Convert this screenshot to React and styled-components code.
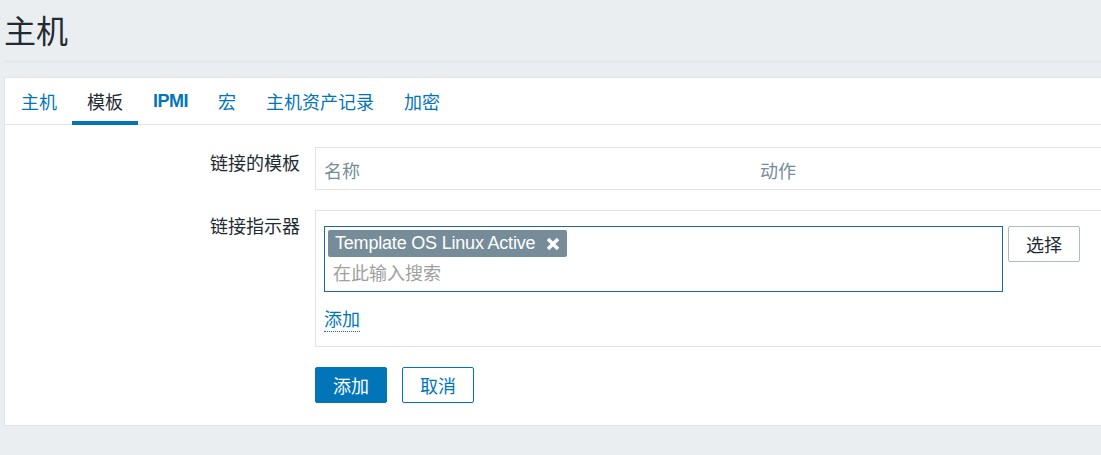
import React from "react";
import styled, { createGlobalStyle } from "styled-components";

const GlobalStyle = createGlobalStyle`
  html, body {
    margin: 0;
    padding: 0;
    background: #ebeef0;
    overflow: hidden;
  }
  body {
    font-family: "Liberation Sans", Arial, "Noto Sans CJK SC", sans-serif;
    font-size: 18px;
    color: #1f2c33;
  }
  * { box-sizing: border-box; }
`;

const Page = styled.div`
  width: 1400px;
  padding-left: 4px;
`;

const Header = styled.header`
  height: 62px;
  display: flex;
  align-items: center;
  border-bottom: 1px solid #dfe4e7;
`;

const Title = styled.h1`
  margin: 0;
  padding-top: 3px;
  font-size: 32px;
  font-weight: normal;
  line-height: 40px;
  color: #1f2c33;
`;

const Panel = styled.section`
  margin-top: 15px;
  background: #ffffff;
  border: 1px solid #dfe4e7;
  padding-bottom: 22px;
`;

const TabList = styled.nav`
  display: flex;
  height: 47px;
  padding-left: 1px;
  border-bottom: 1px solid #dfe4e7;
`;

const Tab = styled.a`
  position: relative;
  display: flex;
  align-items: center;
  padding: 0 15px;
  color: ${(p) => (p.$active ? "#1f2c33" : "#0275b8")};
  font-weight: ${(p) => (p.$bold ? "bold" : "normal")};
  letter-spacing: ${(p) => (p.$bold ? "-0.5px" : "normal")};
  text-decoration: none;
  cursor: pointer;
  &::after {
    content: "";
    display: ${(p) => (p.$active ? "block" : "none")};
    position: absolute;
    left: 0;
    right: 0;
    bottom: -1px;
    height: 4px;
    background: #0275b8;
  }
`;

const Form = styled.div`
  display: grid;
  grid-template-columns: 295px 1fr;
  column-gap: 15px;
  row-gap: 20px;
  padding-top: 22px;
`;

const Label = styled.div`
  text-align: right;
  padding-top: 6px;
  line-height: 22px;
  color: #1f2c33;
`;

const FieldBox = styled.div`
  border: 1px solid #dfe4e7;
  border-right: none;
  background: #ffffff;
  padding: ${(p) => p.$padding || "0"};
`;

const HeaderRow = styled.div`
  display: flex;
  height: 41px;
  align-items: center;
  color: #768d99;
`;

const HeaderCell = styled.div`
  width: ${(p) => p.$width || "auto"};
  padding-left: 8px;
  padding-top: 2px;
`;

const MultiRow = styled.div`
  display: flex;
  align-items: flex-start;
  gap: 5px;
`;

const MultiSelect = styled.div`
  width: 679px;
  min-height: 66px;
  border: 1px solid #1f65a6;
  padding: 3px;
`;

const Tag = styled.span`
  display: inline-flex;
  align-items: center;
  gap: 11px;
  height: 27px;
  padding: 0 7px 0 7px;
  background: #768d99;
  color: #ffffff;
  border-radius: 2px;
  line-height: 27px;
  letter-spacing: -0.2px;
`;

const RemoveIcon = styled.svg`
  width: 14px;
  height: 14px;
  display: block;
`;

const SearchInput = styled.div`
  height: 31px;
  line-height: 31px;
  padding: 2px 0 0 5px;
  color: #a0a0a0;
`;

const Button = styled.button`
  width: 72px;
  height: 36px;
  padding: 0;
  font-family: inherit;
  font-size: 18px;
  border-radius: 2px;
  cursor: pointer;
  border: 1px solid ${(p) => (p.$variant === "primary" || p.$variant === "outline" ? "#0275b8" : "#acbbc2")};
  background: ${(p) => (p.$variant === "primary" ? "#0275b8" : "#ffffff")};
  color: ${(p) =>
    p.$variant === "primary" ? "#ffffff" : p.$variant === "outline" ? "#0275b8" : "#1f2c33"};
`;

const AddLink = styled.a`
  display: inline-block;
  margin-top: 17px;
  line-height: 22px;
  color: #0275b8;
  border-bottom: 1px dotted #0275b8;
  text-decoration: none;
  cursor: pointer;
`;

const ButtonRow = styled.div`
  grid-column: 2;
  display: flex;
  gap: 15px;
`;

const tabs = [
  { label: "主机" },
  { label: "模板", active: true },
  { label: "IPMI", bold: true },
  { label: "宏" },
  { label: "主机资产记录" },
  { label: "加密" },
];

export default function App() {
  return (
    <>
      <GlobalStyle />
      <Page>
        <Header>
          <Title>主机</Title>
        </Header>
        <Panel>
          <TabList>
            {tabs.map((t) => (
              <Tab key={t.label} $active={t.active} $bold={t.bold}>
                {t.label}
              </Tab>
            ))}
          </TabList>
          <Form>
            <Label>链接的模板</Label>
            <FieldBox>
              <HeaderRow>
                <HeaderCell $width="436px">名称</HeaderCell>
                <HeaderCell>动作</HeaderCell>
              </HeaderRow>
            </FieldBox>

            <Label>链接指示器</Label>
            <FieldBox $padding="15px 8px 14px 8px">
              <MultiRow>
                <MultiSelect>
                  <Tag>
                    Template OS Linux Active
                    <RemoveIcon viewBox="0 0 14 14">
                      <path
                        d="M2 2 L12 12 M12 2 L2 12"
                        stroke="#ffffff"
                        strokeWidth="3.5"
                        strokeLinecap="butt"
                      />
                    </RemoveIcon>
                  </Tag>
                  <SearchInput>在此输入搜索</SearchInput>
                </MultiSelect>
                <Button>选择</Button>
              </MultiRow>
              <AddLink>添加</AddLink>
            </FieldBox>

            <ButtonRow>
              <Button $variant="primary">添加</Button>
              <Button $variant="outline">取消</Button>
            </ButtonRow>
          </Form>
        </Panel>
      </Page>
    </>
  );
}
